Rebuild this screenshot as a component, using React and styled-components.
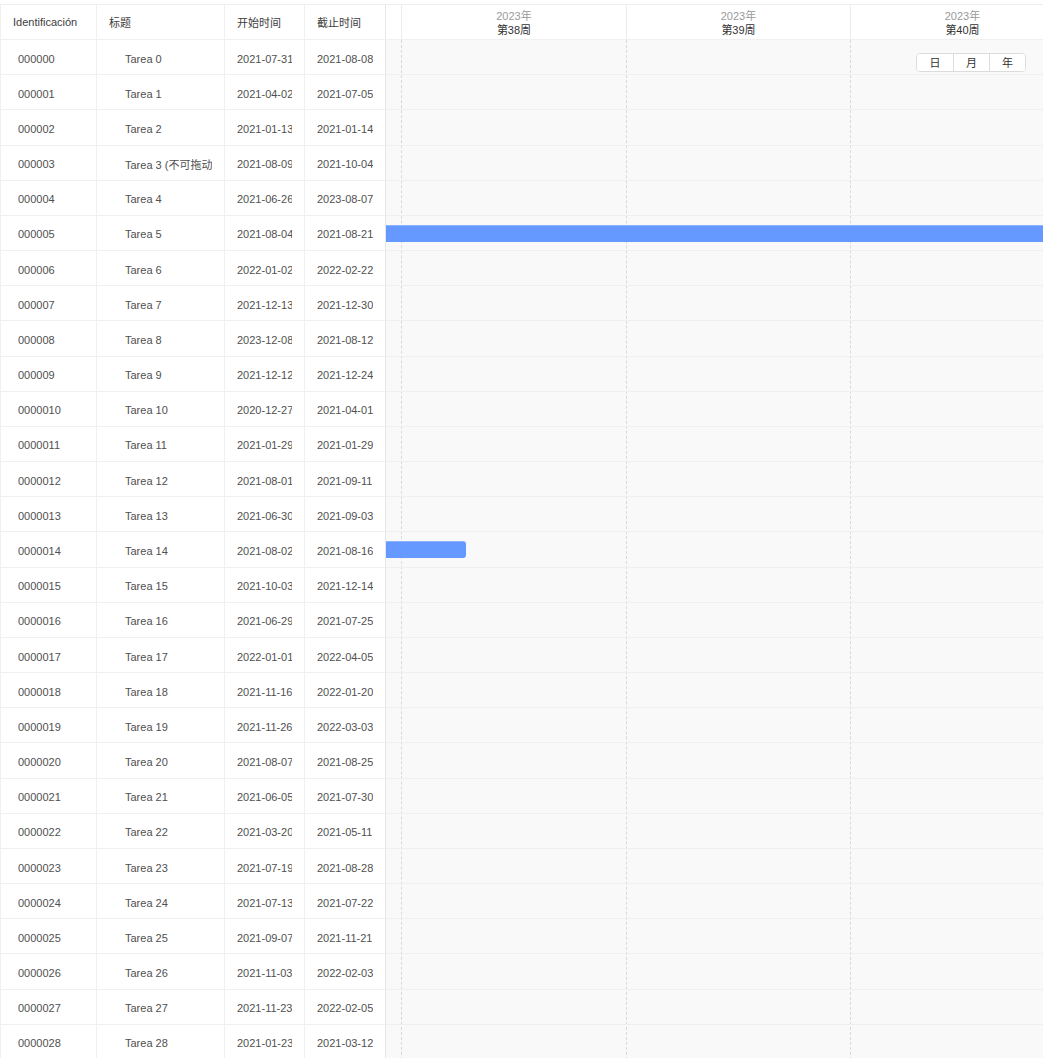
import React from "react"
import styled, { createGlobalStyle } from "styled-components"

const GlobalStyle = createGlobalStyle`
  html, body {
    margin: 0;
    padding: 0;
    overflow: hidden;
    background: #fff;
  }
  body {
    font-family: "Liberation Sans", "Noto Sans CJK SC", sans-serif;
    font-size: 11px;
    color: #505050;
  }
`

const ROW_HEIGHT = 35.18
const WEEK_WIDTH = 224.5
const DAY_WIDTH = WEEK_WIDTH / 7

const tasks = [
  ["000000", "Tarea 0", "2021-07-31", "2021-08-08"],
  ["000001", "Tarea 1", "2021-04-02", "2021-07-05"],
  ["000002", "Tarea 2", "2021-01-13", "2021-01-14"],
  ["000003", "Tarea 3 (不可拖动)", "2021-08-09", "2021-10-04"],
  ["000004", "Tarea 4", "2021-06-26", "2023-08-07"],
  ["000005", "Tarea 5", "2021-08-04", "2021-08-21", { from: 0, days: 40 }],
  ["000006", "Tarea 6", "2022-01-02", "2022-02-22"],
  ["000007", "Tarea 7", "2021-12-13", "2021-12-30"],
  ["000008", "Tarea 8", "2023-12-08", "2021-08-12"],
  ["000009", "Tarea 9", "2021-12-12", "2021-12-24"],
  ["0000010", "Tarea 10", "2020-12-27", "2021-04-01"],
  ["0000011", "Tarea 11", "2021-01-29", "2021-01-29"],
  ["0000012", "Tarea 12", "2021-08-01", "2021-09-11"],
  ["0000013", "Tarea 13", "2021-06-30", "2021-09-03"],
  ["0000014", "Tarea 14", "2021-08-02", "2021-08-16", { from: 0, days: 2.5 }],
  ["0000015", "Tarea 15", "2021-10-03", "2021-12-14"],
  ["0000016", "Tarea 16", "2021-06-29", "2021-07-25"],
  ["0000017", "Tarea 17", "2022-01-01", "2022-04-05"],
  ["0000018", "Tarea 18", "2021-11-16", "2022-01-20"],
  ["0000019", "Tarea 19", "2021-11-26", "2022-03-03"],
  ["0000020", "Tarea 20", "2021-08-07", "2021-08-25"],
  ["0000021", "Tarea 21", "2021-06-05", "2021-07-30"],
  ["0000022", "Tarea 22", "2021-03-20", "2021-05-11"],
  ["0000023", "Tarea 23", "2021-07-19", "2021-08-28"],
  ["0000024", "Tarea 24", "2021-07-13", "2021-07-22"],
  ["0000025", "Tarea 25", "2021-09-07", "2021-11-21"],
  ["0000026", "Tarea 26", "2021-11-03", "2022-02-03"],
  ["0000027", "Tarea 27", "2021-11-23", "2022-02-05"],
  ["0000028", "Tarea 28", "2021-01-23", "2021-03-12"],
]

const columns = [
  { title: "Identificación", width: 97, indent: 5 },
  { title: "标题", width: 128, indent: 16 },
  { title: "开始时间", width: 80, indent: 0 },
  { title: "截止时间", width: 81, indent: 0 },
]

const weeks = [
  { width: 15 },
  { width: 225, year: "2023年", week: "第38周" },
  { width: 224, year: "2023年", week: "第39周" },
  { width: 224, year: "2023年", week: "第40周" },
]

const Gantt = styled.div`
  display: flex;
  margin-top: 4px;
  border-top: 1px solid #eeeeee;
  width: 100%;
`

const TablePane = styled.div`
  flex: none;
  width: 386px;
  border-left: 1px solid #f0f0f0;
  box-sizing: border-box;
`

const TableRow = styled.div`
  display: grid;
  grid-template-columns: 96px 128px 80px 81px;
  height: ${(p) => (p.$header ? "35px" : `${ROW_HEIGHT}px`)};
  box-sizing: border-box;
  border-bottom: 1px solid #f0f0f0;
`

const Cell = styled.div`
  display: flex;
  align-items: center;
  padding: ${(p) => (p.$header ? "0" : "3px")} 12px 0 ${(p) => 12 + (p.$indent || 0)}px;
  border-right: 1px solid ${(p) => (p.$last ? "#e6e6e6" : "#f0f0f0")};
  white-space: nowrap;
  overflow: hidden;
  min-width: 0;
  color: ${(p) => (p.$header ? "#3d3d3d" : "#505050")};
`

const CellText = styled.span`
  display: block;
  overflow: hidden;
`

const ChartPane = styled.div`
  flex: 1;
  min-width: 0;
  overflow: hidden;
`

const ChartHeader = styled.div`
  display: flex;
  height: 35px;
  box-sizing: border-box;
  border-bottom: 1px solid #f0f0f0;
  background: #fff;
`

const HeaderCell = styled.div`
  flex: none;
  width: ${(p) => p.$width}px;
  box-sizing: border-box;
  border-left: ${(p) => (p.$first ? "none" : "1px solid #ececec")};
  display: flex;
  flex-direction: column;
  align-items: center;
  justify-content: center;
  padding-top: 1px;
  line-height: 14px;
  font-size: 11px;
`

const YearLabel = styled.span`
  color: #9a9a9a;
`

const WeekLabel = styled.span`
  color: #333;
`

const ChartBody = styled.div`
  position: relative;
  background: #f9f9f9;
`

const GridLines = styled.div`
  position: absolute;
  inset: 0;
  display: flex;
  pointer-events: none;
`

const GridColumn = styled.div`
  flex: none;
  width: ${(p) => p.$width}px;
  box-sizing: border-box;
  border-left: ${(p) => (p.$first ? "none" : "1px dashed #d9d9d9")};
`

const ChartRow = styled.div`
  position: relative;
  height: ${ROW_HEIGHT}px;
  box-sizing: border-box;
  border-bottom: 1px solid #f0f0f0;
`

const Bar = styled.div`
  position: absolute;
  top: 9px;
  height: 17px;
  box-sizing: border-box;
  background: #6699ff;
  border-top: 1px solid #8cb3ff;
  border-radius: 0 3px 3px 0;
`

const ViewSwitch = styled.div`
  position: absolute;
  top: 13px;
  right: 17px;
  display: flex;
  background: #fff;
  border: 1px solid #dcdcdc;
  border-radius: 4px;
  overflow: hidden;
  z-index: 2;
`

const SwitchButton = styled.button`
  width: 36px;
  height: 17px;
  padding: 0;
  border: none;
  border-left: ${(p) => (p.$first ? "none" : "1px solid #dcdcdc")};
  background: #fff;
  font-family: "Noto Sans CJK SC", sans-serif;
  font-size: 11px;
  line-height: 17px;
  color: #333;
`

const App = () => (
  <>
    <GlobalStyle />
    <Gantt>
      <TablePane>
        <TableRow $header>
          {columns.map((c, i) => (
            <Cell key={c.title} $header $last={i === columns.length - 1}>
              <CellText>{c.title}</CellText>
            </Cell>
          ))}
        </TableRow>
        {tasks.map((row) => (
          <TableRow key={row[0]}>
            {columns.map((c, i) => (
              <Cell key={c.title} $indent={c.indent} $last={i === columns.length - 1}>
                <CellText>{row[i]}</CellText>
              </Cell>
            ))}
          </TableRow>
        ))}
      </TablePane>
      <ChartPane>
        <ChartHeader>
          {weeks.map((w, i) => (
            <HeaderCell key={i} $width={w.width} $first={i === 0}>
              {w.year && <YearLabel>{w.year}</YearLabel>}
              {w.week && <WeekLabel>{w.week}</WeekLabel>}
            </HeaderCell>
          ))}
        </ChartHeader>
        <ChartBody>
          <GridLines>
            {weeks.map((w, i) => (
              <GridColumn key={i} $width={w.width} $first={i === 0} />
            ))}
          </GridLines>
          <ViewSwitch>
            <SwitchButton $first>日</SwitchButton>
            <SwitchButton>月</SwitchButton>
            <SwitchButton>年</SwitchButton>
          </ViewSwitch>
          {tasks.map((row) => {
            const bar = row[4]
            return (
              <ChartRow key={row[0]}>
                {bar && (
                  <Bar
                    style={{
                      left: bar.from * DAY_WIDTH,
                      width: bar.days * DAY_WIDTH,
                    }}
                  />
                )}
              </ChartRow>
            )
          })}
        </ChartBody>
      </ChartPane>
    </Gantt>
  </>
)

export default App
